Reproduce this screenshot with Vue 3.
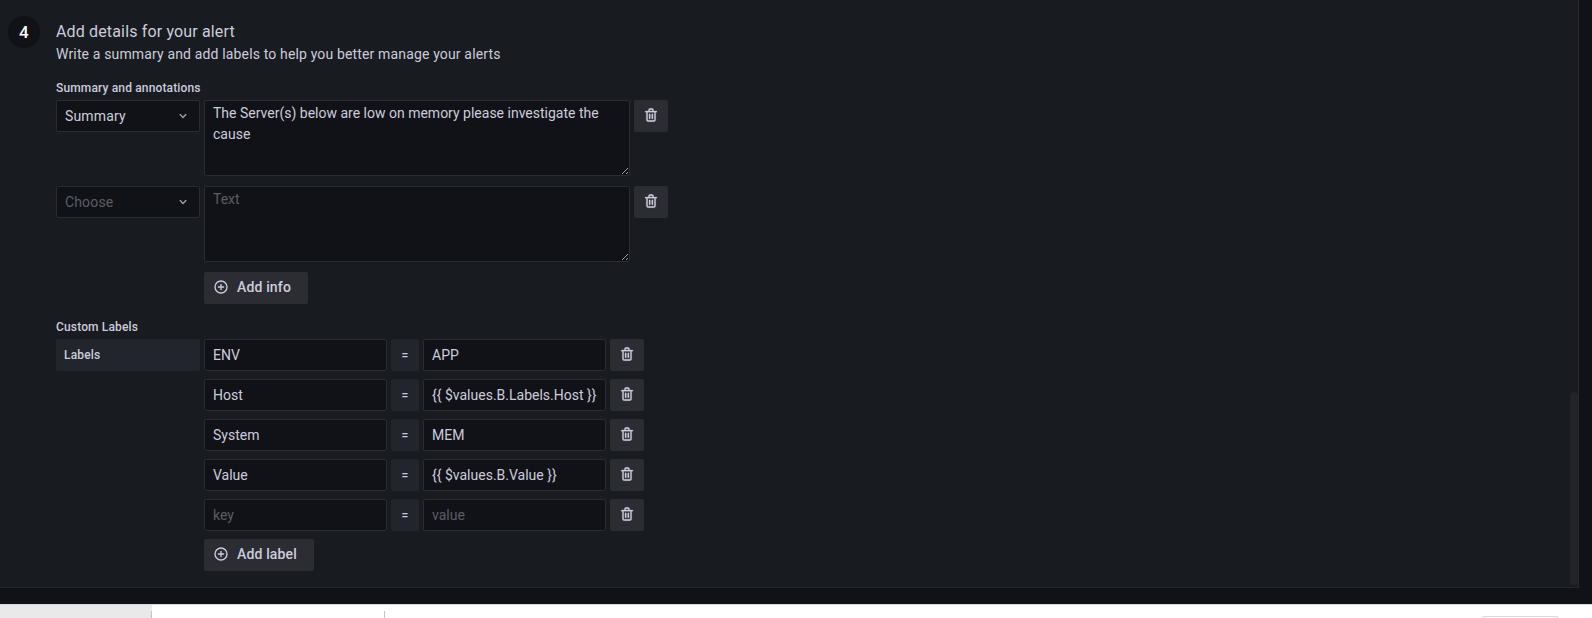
<script setup>
const notes = [
  { key: 'Summary', text: 'The Server(s) below are low on memory please investigate the cause' },
  { key: '', text: '' }
]
const labels = [
  { key: 'ENV', value: 'APP' },
  { key: 'Host', value: '{{ $values.B.Labels.Host }}' },
  { key: 'System', value: 'MEM' },
  { key: 'Value', value: '{{ $values.B.Value }}' },
  { key: '', value: '' }
]
const trash = 'M10,18a1,1,0,0,0,1-1V11a1,1,0,0,0-2,0v6A1,1,0,0,0,10,18ZM20,6H16V5a3,3,0,0,0-3-3H11A3,3,0,0,0,8,5V6H4A1,1,0,0,0,4,8H5V19a3,3,0,0,0,3,3h8a3,3,0,0,0,3-3V8h1a1,1,0,0,0,0-2ZM10,5a1,1,0,0,1,1-1h2a1,1,0,0,1,1,1V6H10Zm7,14a1,1,0,0,1-1,1H8a1,1,0,0,1-1-1V8H17Zm-3-1a1,1,0,0,0,1-1V11a1,1,0,0,0-2,0v6A1,1,0,0,0,14,18Z'
const plus = 'M12,2A10,10,0,1,0,22,12,10,10,0,0,0,12,2Zm0,18a8,8,0,1,1,8-8A8,8,0,0,1,12,20Zm4-9H13V8a1,1,0,0,0-2,0v3H8a1,1,0,0,0,0,2h3v3a1,1,0,0,0,2,0V13h3a1,1,0,0,0,0-2Z'
const angle = 'M17,9.17a1,1,0,0,0-1.41,0L12,12.71,8.46,9.17a1,1,0,0,0-1.41,0,1,1,0,0,0,0,1.42l4.24,4.24a1,1,0,0,0,1.42,0L17,10.59A1,1,0,0,0,17,9.17Z'
</script>

<template>
  <div class="page">
    <div class="canvas">
      <div class="panel">
        <div class="step">
          <div class="step-num">4</div>
          <div class="step-body">
            <div class="title">Add details for your alert</div>
            <div class="subtitle">Write a summary and add labels to help you better manage your alerts</div>

            <div class="field-label first">Summary and annotations</div>
            <div class="note-rows">
              <div v-for="(n, i) in notes" :key="i" class="note-row">
                <div class="select" :class="{ empty: !n.key }">
                  <span>{{ n.key || 'Choose' }}</span>
                  <svg viewBox="0 0 24 24" width="16" height="16" fill="currentColor"><path :d="angle" /></svg>
                </div>
                <textarea class="area" :value="n.text" placeholder="Text" spellcheck="false"></textarea>
                <button class="icon-btn"><svg viewBox="0 0 24 24" width="16" height="16" fill="currentColor" stroke="currentColor" stroke-width="0.4"><path :d="trash" /></svg></button>
              </div>
            </div>
            <div class="add-row">
              <button class="add-btn info">
                <svg viewBox="0 0 24 24" width="16" height="16" fill="currentColor"><path :d="plus" /></svg>
                Add info
              </button>
            </div>

            <div class="field-label second">Custom Labels</div>
            <div class="labels">
              <div class="labels-tag">Labels</div>
              <div class="label-rows">
                <div v-for="(l, i) in labels" :key="i" class="label-row">
                  <input class="input key" :value="l.key" placeholder="key" spellcheck="false" />
                  <div class="equals">=</div>
                  <input class="input val" :value="l.value" placeholder="value" spellcheck="false" />
                  <button class="icon-btn"><svg viewBox="0 0 24 24" width="16" height="16" fill="currentColor" stroke="currentColor" stroke-width="0.4"><path :d="trash" /></svg></button>
                </div>
                <button class="add-btn lab">
                  <svg viewBox="0 0 24 24" width="16" height="16" fill="currentColor"><path :d="plus" /></svg>
                  Add label
                </button>
              </div>
            </div>
          </div>
        </div>
        <div class="scroll-thumb"></div>
      </div>
    </div>
    <div class="footer">
      <div class="tab-active"></div>
      <div class="tab-cell"></div>
      <div class="foot-spacer"></div>
      <div class="foot-btn"></div>
    </div>
  </div>
</template>

<style>
html, body { margin: 0; background: #fff; overflow: hidden; }
</style>

<style scoped>
.page {
  width: 1592px;
  height: 618px;
  display: flex;
  flex-direction: column;
  overflow: hidden;
  font-family: Roboto, "Liberation Sans", sans-serif;
  letter-spacing: 0.15px;
  color: #ccccdc;
}
.canvas {
  height: 605px;
  flex: none;
  background: #111217;
  border-bottom: 1px solid #d8d9dc;
  box-sizing: border-box;
}
.panel {
  position: relative;
  box-sizing: border-box;
  width: 1579px;
  height: 588px;
  background: #181b1f;
  border-right: 1px solid #25272c;
  border-bottom: 1px solid #25272c;
}
.step {
  display: flex;
  padding: 16px 0 0 8px;
}
.step-num {
  width: 32px;
  height: 32px;
  flex: none;
  border-radius: 50%;
  background: #111217;
  color: #fff;
  font-size: 17px;
  font-weight: 500;
  line-height: 32px;
  text-align: center;
}
.step-body {
  margin-left: 16px;
}
.title {
  font-size: 16px;
  line-height: 32px;
  height: 22px;
}
.subtitle {
  font-size: 14px;
  line-height: 21px;
  margin-top: 6px;
}
.field-label {
  font-size: 12px;
  font-weight: 500;
  line-height: 15px;
}
.field-label.first { margin-top: 16px; }
.field-label.second { margin-top: 16px; margin-bottom: 4px; }
.note-rows {
  display: flex;
  flex-direction: column;
  gap: 10px;
  margin-top: 4px;
}
.note-row {
  display: flex;
  align-items: flex-start;
  gap: 4px;
}
.select {
  width: 144px;
  height: 32px;
  box-sizing: border-box;
  background: #111217;
  border: 1px solid #2a2c31;
  border-radius: 2px;
  display: flex;
  align-items: center;
  justify-content: space-between;
  padding: 0 8px;
  font-size: 14px;
}
.select svg { color: #9fa1ad; }
.select.empty span { color: #5b5d65; }
.area {
  width: 426px;
  height: 76px;
  box-sizing: border-box;
  background: #111217;
  border: 1px solid #2a2c31;
  border-radius: 2px;
  color: #ccccdc;
  font-family: inherit;
  font-size: 14px;
  line-height: 21px;
  letter-spacing: normal;
  padding: 2px 8px;
  margin: 0;
  outline: none;
  resize: vertical;
  display: block;
}
.area::placeholder, .input::placeholder { color: #5b5d65; opacity: 1; }
.icon-btn {
  width: 34px;
  height: 32px;
  flex: none;
  padding: 0 0 2px;
  border: none;
  border-radius: 2px;
  background: #2b2d33;
  color: #ccccdc;
  display: flex;
  align-items: center;
  justify-content: center;
}
.add-row {
  padding: 10px 0 0 148px;
}
.add-btn {
  height: 32px;
  box-sizing: border-box;
  border: none;
  border-radius: 2px;
  background: #2b2d33;
  color: #ccccdc;
  font-family: inherit;
  font-size: 14px;
  font-weight: 500;
  letter-spacing: 0.15px;
  display: flex;
  align-items: center;
  gap: 8px;
  padding: 0 0 2px 9px;
}
.add-btn.info { width: 104px; }
.add-btn.lab { width: 110px; }
.labels {
  display: flex;
  align-items: flex-start;
  gap: 4px;
}
.labels-tag {
  width: 144px;
  height: 32px;
  box-sizing: border-box;
  background: #22252b;
  border-radius: 2px;
  font-size: 12px;
  font-weight: 500;
  line-height: 32px;
  padding-left: 8px;
}
.label-rows {
  display: flex;
  flex-direction: column;
  align-items: flex-start;
  gap: 8px;
}
.label-row {
  display: flex;
  gap: 4px;
}
.input {
  height: 32px;
  box-sizing: border-box;
  background: #111217;
  border: 1px solid #2a2c31;
  border-radius: 2px;
  color: #ccccdc;
  font-family: inherit;
  font-size: 14px;
  letter-spacing: normal;
  padding: 0 8px;
  margin: 0;
  outline: none;
}
.input.key { width: 183px; }
.input.val { width: 183px; }
.equals {
  width: 28px;
  height: 32px;
  background: #22252b;
  border-radius: 2px;
  font-size: 12px;
  font-weight: 500;
  line-height: 32px;
  text-align: center;
}
.scroll-thumb {
  position: absolute;
  left: 1570px;
  top: 392px;
  width: 8px;
  height: 193px;
  border-radius: 4px;
  background: #212429;
}
.footer {
  height: 13px;
  flex: none;
  display: flex;
  background: #fff;
}
.tab-active {
  width: 152px;
  background: #e9e9e9;
}
.tab-cell {
  width: 234px;
  margin: 6px 0 0 -1px;
  box-sizing: border-box;
  border-left: 1px solid #c4c4c4;
  border-right: 1px solid #c4c4c4;
}
.foot-spacer { flex: 1; }
.foot-btn {
  width: 76px;
  margin: 11px 34px 0 0;
  box-sizing: border-box;
  border: 1px solid #d8d9dc;
  border-bottom: none;
  border-radius: 3px 3px 0 0;
}
</style>
